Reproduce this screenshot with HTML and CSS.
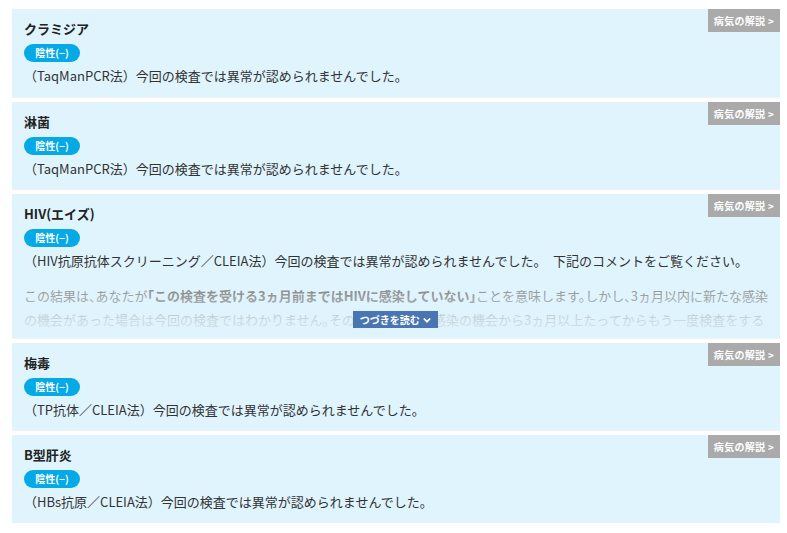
FILE: index.html
```html
<!DOCTYPE html>
<html lang="ja">
<head>
<meta charset="utf-8">
<link rel="stylesheet" href="styles.css">
</head>
<body>
<div class="list">
  <div class="card">
    <a class="guide">病気の解説 &gt;</a>
    <div class="title">クラミジア</div>
    <span class="badge">陰性(−)</span>
    <p class="result">（TaqManPCR法）今回の検査では異常が認められませんでした。</p>
  </div>
  <div class="card">
    <a class="guide">病気の解説 &gt;</a>
    <div class="title">淋菌</div>
    <span class="badge">陰性(−)</span>
    <p class="result">（TaqManPCR法）今回の検査では異常が認められませんでした。</p>
  </div>
  <div class="card card-long">
    <a class="guide">病気の解説 &gt;</a>
    <div class="title">HIV(エイズ)</div>
    <span class="badge">陰性(−)</span>
    <p class="result">（HIV抗原抗体スクリーニング／CLEIA法）今回の検査では異常が認められませんでした。　下記のコメントをご覧ください。</p>
    <div class="comment">
      <p>この結果は、あなたが<strong>「この検査を受ける3ヵ月前まではHIVに感染していない」</strong>ことを意味します。しかし、3ヵ月以内に新たな感染の機会があった場合は今回の検査ではわかりません。その場合は最後の感染の機会から3ヵ月以上たってからもう一度検査をすることをおすすめします。</p>
      <div class="fade"></div>
      <a class="more">つづきを読む <svg class="chev" viewBox="0 0 10 8" width="8" height="7"><path d="M1 1.5 L5 5.5 L9 1.5" fill="none" stroke="#fff" stroke-width="2.2"/></svg></a>
    </div>
  </div>
  <div class="card">
    <a class="guide">病気の解説 &gt;</a>
    <div class="title">梅毒</div>
    <span class="badge">陰性(−)</span>
    <p class="result">（TP抗体／CLEIA法）今回の検査では異常が認められませんでした。</p>
  </div>
  <div class="card">
    <a class="guide">病気の解説 &gt;</a>
    <div class="title">B型肝炎</div>
    <span class="badge">陰性(−)</span>
    <p class="result">（HBs抗原／CLEIA法）今回の検査では異常が認められませんでした。</p>
  </div>
</div>
</body>
</html>
```
FILE: styles.css
```css
* { box-sizing: border-box; }
html, body {
  margin: 0;
  padding: 0;
  background: #fff;
}
body {
  font-family: "Noto Sans CJK JP", "Noto Sans", sans-serif;
  color: #333;
}
.list {
  padding: 9px 7px 0 12px;
  display: flex;
  flex-direction: column;
  gap: 5px;
}
.card {
  position: relative;
  height: 87px;
  flex: none;
  background: #dff4fd;
  padding: 11px 12px 0 12px;
  box-shadow: 0 1px 1px rgba(0,0,0,0.05);
  overflow: hidden;
}
.card:first-child,
.card:last-child {
  height: 88px;
}
.card-long {
  height: 144px;
}
.guide {
  position: absolute;
  top: 0;
  right: 0;
  width: 72px;
  height: 23px;
  background: #aaaaaa;
  color: #fff;
  font-size: 10px;
  font-weight: bold;
  line-height: 23px;
  text-align: center;
  letter-spacing: 0.3px;
}
.title {
  font-size: 13px;
  font-weight: bold;
  line-height: 18px;
  color: #222;
}
.badge {
  display: inline-block;
  margin-top: 6px;
  width: 56px;
  height: 18px;
  border-radius: 9px;
  background: #05a9e5;
  color: #fff;
  font-size: 10px;
  font-weight: bold;
  line-height: 18px;
  text-align: center;
  vertical-align: top;
}
.result {
  margin: 4px 0 0 0;
  font-size: 13px;
  line-height: 20px;
  color: #333;
}
.comment {
  position: relative;
  margin-top: 13px;
  height: 60px;
  overflow: hidden;
}
.comment p {
  margin: 0;
  font-size: 13px;
  line-height: 24px;
  color: #999;
  font-feature-settings: "halt";
}
.comment strong {
  font-weight: bold;
  color: #8f8f8f;
}
.fade {
  position: absolute;
  left: 0;
  right: 0;
  top: 8px;
  bottom: 0;
  background: linear-gradient(to bottom, rgba(223,244,253,0) 0%, rgba(223,244,253,0.7) 55%, rgba(223,244,253,0.9) 100%);
}
.more {
  position: absolute;
  left: 329px;
  top: 27px;
  width: 85px;
  height: 17px;
  background: #4a75b3;
  color: #fff;
  font-size: 10px;
  font-weight: bold;
  line-height: 17px;
  text-align: center;
  white-space: nowrap;
}
.chev {
  vertical-align: 0px;
  margin-left: 1px;
}
```
